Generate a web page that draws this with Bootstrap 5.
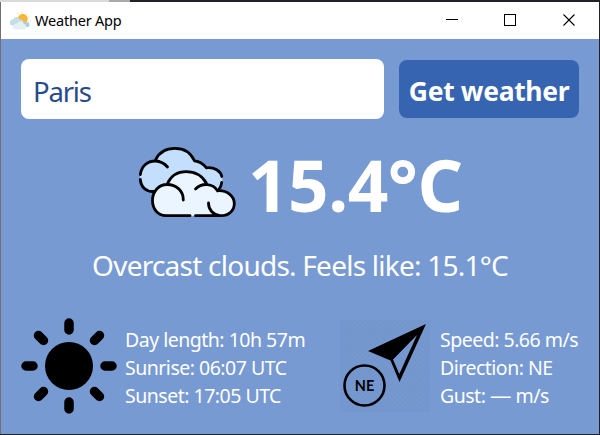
<!DOCTYPE html>
<html lang="en">
<head>
<meta charset="utf-8">
<meta name="viewport" content="width=device-width, initial-scale=1">
<title>Weather App</title>
<link href="https://cdn.jsdelivr.net/npm/bootstrap@5.3.0/dist/css/bootstrap.min.css" rel="stylesheet">
<style>
  html, body { height: 100%; }
  body { font-family: "Noto Sans", "Open Sans", sans-serif; background: #222127; overflow: hidden; }
  .desktop-edge { height: 2px; background: linear-gradient(90deg, #d9dbd8 0 109px, #aaa 109px 130px, #222127 130px); }
  .app-window { width: 599px; height: 432px; border-left: 1px solid #707070; background: #789ad2; }
  .title-bar { height: 37px; background: #fff; color: #000; padding-left: 9px; }
  .title-text { font-size: 14.5px; letter-spacing: -.2px; line-height: 20px; margin: 0 0 2px 5px; }
  .win-buttons { padding-right: 24px; gap: 46px; padding-bottom: 1px; }
  .search-row { padding: 20px 20px 0; gap: 15px; }
  .city-input { height: 60px; border: 0; border-radius: 8px; color: #274b8b; font-size: 27.5px; letter-spacing: -1.2px; padding: 4px 12px 0; }
  .get-btn { width: 180px; height: 58px; margin-top: 1px; border: 0; border-radius: 8px; background: #3664b0; color: #fff; font-size: 26.5px; font-weight: 700; letter-spacing: -.35px; padding: 6px 0 0; }
  .temp-row { height: 96px; margin-top: 16px; padding-left: 137px; gap: 12px; }
  .clouds { margin-bottom: 2px; }
  .temp { font-size: 71px; font-weight: 700; line-height: 96px; letter-spacing: -.5px; padding-top: 3px; }
  .summary { font-size: 28px; line-height: 38px; margin-top: 15px; letter-spacing: -.76px; }
  .facts-row { height: 96px; margin-top: 34px; padding-left: 20px; }
  .facts { font-size: 19.5px; line-height: 28px; letter-spacing: -.5px; padding-top: 8px; }
  .sun-facts { width: 223px; padding-left: 8px; }
  .wind-facts { padding-left: 10px; }
  .wind-facts .dash { display: inline-block; transform: scaleX(1.1); margin: 0 1px; }
  .wind-icon { margin-top: 2px; }
  .compass-label { font: 700 14.5px Lato, sans-serif; }
</style>
<script src="https://cdn.jsdelivr.net/npm/bootstrap@5.3.0/dist/js/bootstrap.bundle.min.js"></script>
</head>
<body>
<div class="desktop-edge"></div>
<main class="app-window d-flex flex-column text-white text-nowrap">
  <header class="title-bar d-flex align-items-center flex-shrink-0">
    <svg width="20" height="20" viewBox="0 0 20 20" aria-hidden="true">
      <g stroke="#fbdc8c" stroke-width=".8"><path d="M12 1v1.500M7.500 2l1 1.500M17 2.500l-1 1.500M19.500 6h-1.500M19 10h-1"/></g>
      <circle cx="12.700" cy="8" r="5" fill="#fbb53a"/>
      <path d="M2.500 14.500a3 3 0 0 1 .5-6 3.700 3.700 0 0 1 7 0 3 3 0 0 1 1 6z" fill="#c2dfe4"/>
      <path d="M12 16a3 3 0 0 1 4-4.500 2.300 2.300 0 0 1 3.500 2.500 2 2 0 0 1-1.500 2z" fill="#a9d0d7"/>
      <path d="M5 18.500a2.800 2.800 0 0 1-1-5 3 3 0 0 1 3-1 3.700 3.700 0 0 1 7 .5 3 3 0 0 1 1 5.500z" fill="#e6eff3"/>
    </svg>
    <span class="title-text">Weather App</span>
    <div class="win-buttons d-flex align-items-center ms-auto">
      <svg width="12" height="12" shape-rendering="crispEdges"><path d="M0 5.500h12" stroke="#000"/></svg>
      <svg width="12" height="12" shape-rendering="crispEdges"><rect x=".5" y=".5" width="11" height="11" fill="none" stroke="#000"/></svg>
      <svg width="13" height="12"><path d="M1.500.5l11 11M12.500.5l-11 11" stroke="#000" stroke-width="1.100"/></svg>
    </div>
  </header>
  <form class="search-row d-flex align-items-start" onsubmit="return false">
    <input class="city-input form-control shadow-none" value="Paris" aria-label="City">
    <button class="get-btn btn flex-shrink-0">Get weather</button>
  </form>
  <section class="temp-row d-flex align-items-center flex-shrink-0">
    <svg class="clouds" width="98" height="72" viewBox="138 146 98 72" fill="none" stroke="#000" stroke-width="2.800" stroke-linecap="round" aria-hidden="true">
      <path d="M152 191.500C144 190 140 185 140 177C140 167 147 160.500 155 161C159 152 166 148 175 148C184 148 191 153 194.500 160.500C200 161 204 164 206.500 167.500C214 167 220 171 222 177C223 182 222 187 219 190L190 205L155 200Z" fill="#c3dffd" stroke="none"/>
      <path d="M165 215.700A14.700 14.700 0 0 1 152.500 199C152.500 190 159 184.500 167 184.500C171 176 178 171.500 186 171.500C195 171.500 203 176 206.500 184.500C211 185 215 187 218 190.500C227 190 234.500 195 234.500 203.500C234.500 210.500 229 215.700 221 215.700Z" fill="#eaf5ff" stroke="none"/>
      <path d="M140.300 174.500C141.500 166 147.500 160.800 155.500 161C160 161.300 164.500 163.500 167.500 167M155.500 160C159 152 166.500 148.300 175 148.300C184 148.300 191 153 194.500 160.800C200 161.500 203.500 164 206.500 167.800C214.500 167 220.500 171 221.800 176.500M140.300 179.500C141 187 146 191.800 153.500 191.500M221.700 182.500C221.500 185.500 220 188 218.500 190"/>
      <path d="M190 215.700H166C157.500 215.700 152.500 208.500 152.500 200.500C152.500 191 159 184.500 167 184.500C176.500 184.500 183.500 191 183.300 200M167.500 183.500C171 176 178 171.700 186 171.700C195 171.700 202.500 176 206.500 183.500M195.500 189C202 182.500 213 183 217.500 190.800C227 190 234.300 196 234.300 203.500C234.300 210.500 229 215.700 221 215.700H195.500M208.500 203C208.500 209.500 213 215 220 215.700"/>
    </svg>
    <div class="temp">15.4°C</div>
  </section>
  <div class="summary text-center">Overcast clouds. Feels like: 15.1°C</div>
  <section class="facts-row d-flex align-items-start">
    <svg width="96" height="96" viewBox="-48 -48 96 96" aria-hidden="true">
      <circle r="24"/>
      <path d="M0-43V-36M0 36V43M-43 0H-36M36 0H43M-30.500-30.500l5 5M25.500 25.500l5 5M30.500-30.500l-5 5M-25.500 25.500l-5 5" stroke="#000" stroke-width="9.500" stroke-linecap="round"/>
    </svg>
    <div class="facts sun-facts">
      <div>Day length: 10h 57m</div>
      <div>Sunrise: 06:07 UTC</div>
      <div>Sunset: 17:05 UTC</div>
    </div>
    <svg class="wind-icon" width="90" height="92" viewBox="340 320 90 92" aria-label="North-east wind">
      <defs><pattern id="mesh" width="5" height="5" patternUnits="userSpaceOnUse"><path d="M0 0l5 5M5 0l-5 5" stroke="#6f8fc6" stroke-width=".4"/></pattern></defs>
      <path d="M340 320h90v92h-90z" fill="#7698d0"/><path d="M340 320h90v92h-90z" fill="url(#mesh)"/>
      <path fill-rule="evenodd" d="M426 324L368 351L390.500 360.500L399.500 382ZM417 335L393 359.500L399.300 374Z"/>
      <circle cx="364.500" cy="385.500" r="20" fill="none" stroke="#000" stroke-width="2.600"/>
      <text class="compass-label" x="364.500" y="390.500" text-anchor="middle">NE</text>
    </svg>
    <div class="facts wind-facts">
      <div>Speed: 5.66 m/s</div>
      <div>Direction: NE</div>
      <div>Gust: <span class="dash">—</span> m/s</div>
    </div>
  </section>
</main>
</body>
</html>
